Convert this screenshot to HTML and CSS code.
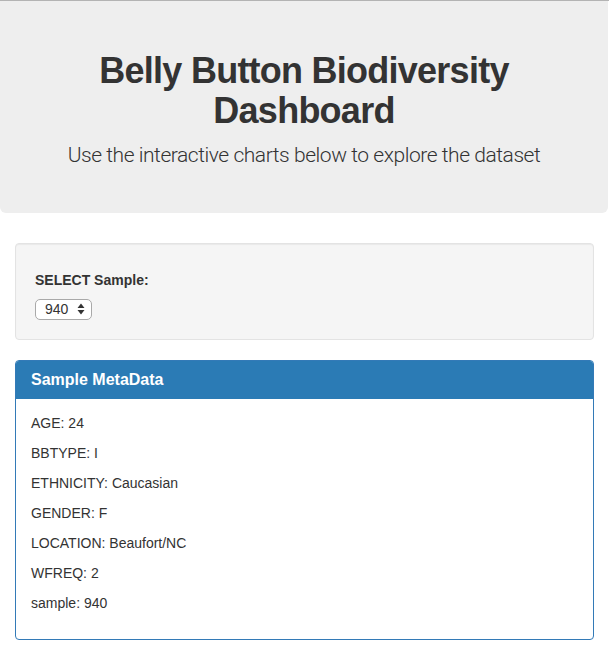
FILE: index.html
```html
<!DOCTYPE html>
<html>
<head>
<meta charset="utf-8">
<link rel="stylesheet" href="styles.css">
</head>
<body>
<div class="topline"></div>
<div class="jumbotron">
  <h1>Belly Button Biodiversity<br>Dashboard</h1>
  <p>Use the interactive charts below to explore the dataset</p>
</div>
<div class="container">
  <div class="well">
    <h5>SELECT Sample:</h5>
    <div class="select">
      <span class="select-value">940</span>
      <svg class="select-arrows" width="8" height="12" viewBox="0 0 8 12"><path d="M4 0.5 L7.5 5 L0.5 5 Z M4 11.5 L7.5 7 L0.5 7 Z" fill="#333"/></svg>
    </div>
  </div>
  <div class="panel">
    <div class="panel-heading"><h3>Sample MetaData</h3></div>
    <div class="panel-body">
      <p>AGE: 24</p>
      <p>BBTYPE: I</p>
      <p>ETHNICITY: Caucasian</p>
      <p>GENDER: F</p>
      <p>LOCATION: Beaufort/NC</p>
      <p>WFREQ: 2</p>
      <p>sample: 940</p>
    </div>
  </div>
</div>
</body>
</html>
```

FILE: styles.css
```css
* { box-sizing: border-box; }
html, body { margin: 0; padding: 0; }
body {
  font-family: "Liberation Sans", Arial, sans-serif;
  font-size: 14px;
  line-height: 1.42857;
  color: #333;
  background: #fff;
}
.topline { height: 1px; background: #b3b3b3; }
.jumbotron {
  background: #eeeeee;
  width: 608px;
  padding: 30px 15px 28px;
  border-radius: 0 0 6px 6px;
  text-align: center;
  margin-bottom: 30px;
}
.jumbotron h1 {
  margin: 20px 0 10px;
  font-size: 36px;
  line-height: 1.1;
  font-weight: 700;
  letter-spacing: -0.75px;
  color: #333;
}
.jumbotron p {
  margin: 0 0 15px;
  font-family: Roboto, "Liberation Sans", sans-serif;
  font-weight: 300;
  font-size: 21px;
  line-height: 30px;
  letter-spacing: -0.45px;
  color: #333;
}
.container { padding: 0 15px; }
.well {
  background: #f5f5f5;
  border: 1px solid #e3e3e3;
  border-radius: 4px;
  box-shadow: inset 0 1px 1px rgba(0,0,0,0.05);
  padding: 19px;
  margin-bottom: 20px;
}
.well h5 {
  margin: 10px 0 10px;
  font-size: 14px;
  line-height: 1.1;
  font-weight: 700;
}
.select {
  display: inline-flex;
  align-items: center;
  height: 21px;
  width: 57px;
  border: 1px solid #a9a9a9;
  border-radius: 5px;
  background: #fff;
  padding: 0 6px 0 9px;
  justify-content: space-between;
  font-size: 14px;
}
.select-value { line-height: 19px; }
.panel {
  border: 1px solid #337ab7;
  border-radius: 4px;
  margin-bottom: 20px;
  background: #fff;
}
.panel-heading {
  background: #2b7bb5;
  color: #fff;
  padding: 10px 15px;
  border-bottom: 1px solid #2b7bb5;
  border-radius: 3px 3px 0 0;
}
.panel-heading h3 {
  margin: 0;
  font-size: 16px;
  line-height: 1.1;
  font-weight: 700;
}
.panel-body { padding: 15px; }
.panel-body p { margin: 0 0 10px; }
```
